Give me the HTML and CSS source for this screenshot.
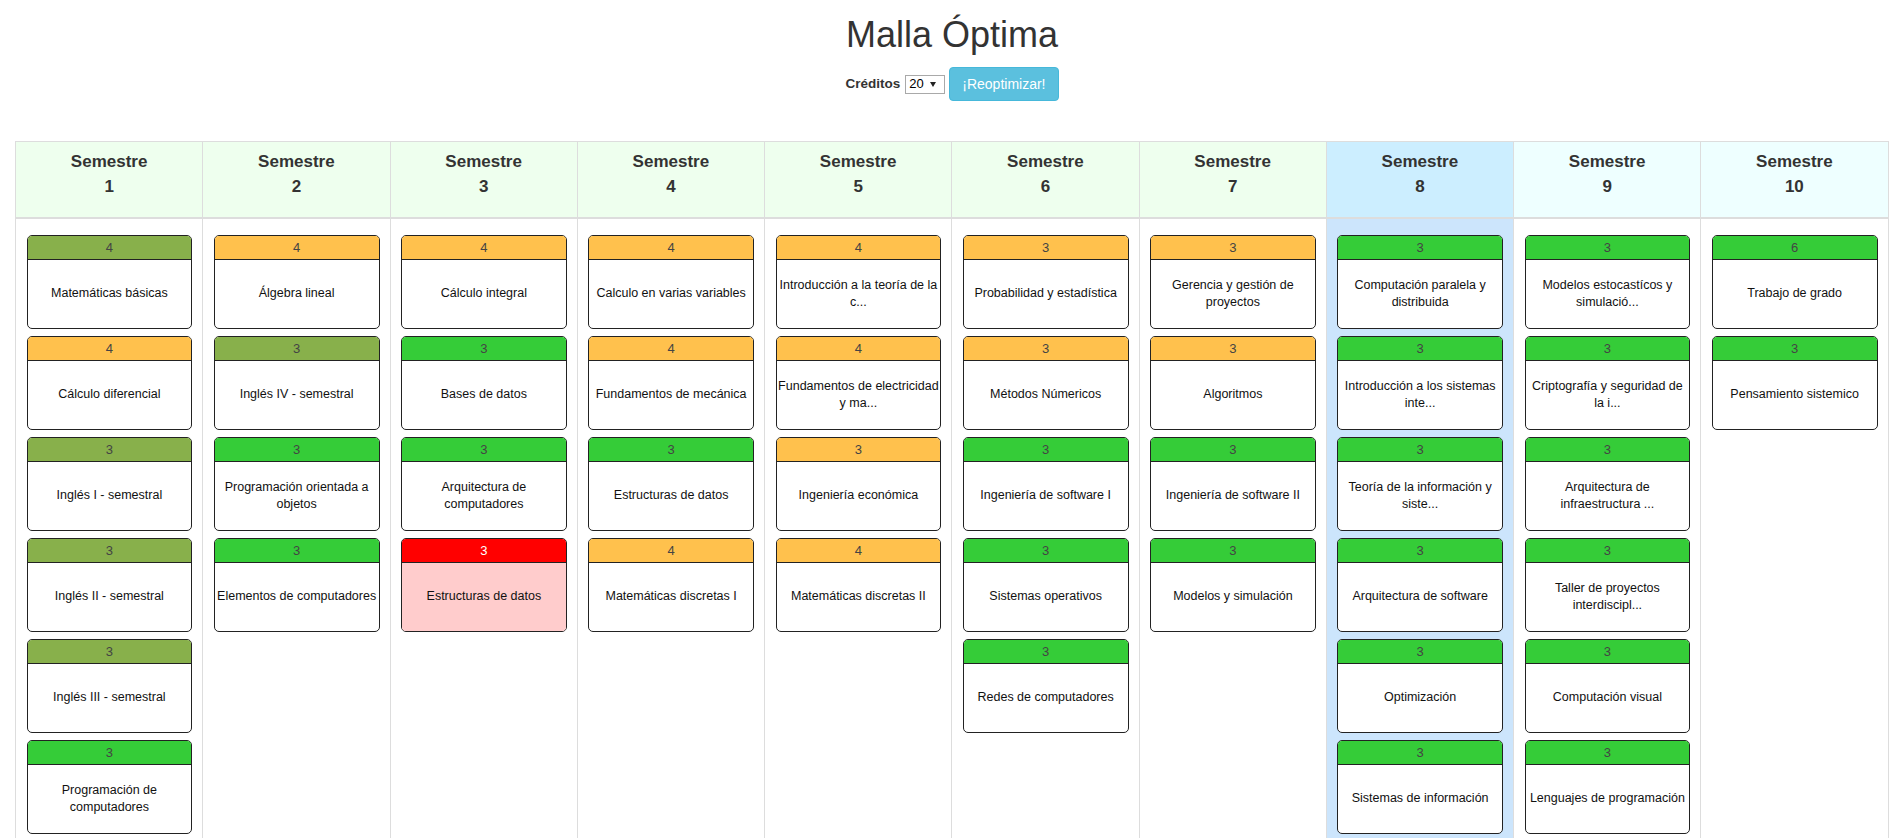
FILE: index.html
```html
<!DOCTYPE html>
<html lang="es">
<head>
<meta charset="utf-8">
<title>Malla Óptima</title>
<link rel="stylesheet" href="styles.css">
</head>
<body>
<div class="page">
  <h1 class="title">Malla Óptima</h1>
  <div class="controls">
    <label class="label">Créditos</label>
    <span class="select">20<span class="arrow"></span></span>
    <button class="btn">¡Reoptimizar!</button>
  </div>

  <div class="board">
    <div class="col">
      <div class="col-head h-green">Semestre<br>1</div>
      <div class="col-body">
        <div class="card"><div class="card-head olive">4</div><div class="card-body">Matemáticas básicas</div></div>
        <div class="card"><div class="card-head orange">4</div><div class="card-body">Cálculo diferencial</div></div>
        <div class="card"><div class="card-head olive">3</div><div class="card-body">Inglés I - semestral</div></div>
        <div class="card"><div class="card-head olive">3</div><div class="card-body">Inglés II - semestral</div></div>
        <div class="card"><div class="card-head olive">3</div><div class="card-body">Inglés III - semestral</div></div>
        <div class="card"><div class="card-head green">3</div><div class="card-body">Programación de computadores</div></div>
      </div>
    </div>
    <div class="col">
      <div class="col-head h-green">Semestre<br>2</div>
      <div class="col-body">
        <div class="card"><div class="card-head orange">4</div><div class="card-body">Álgebra lineal</div></div>
        <div class="card"><div class="card-head olive">3</div><div class="card-body">Inglés IV - semestral</div></div>
        <div class="card"><div class="card-head green">3</div><div class="card-body">Programación orientada a objetos</div></div>
        <div class="card"><div class="card-head green">3</div><div class="card-body">Elementos de computadores</div></div>
      </div>
    </div>
    <div class="col">
      <div class="col-head h-green">Semestre<br>3</div>
      <div class="col-body">
        <div class="card"><div class="card-head orange">4</div><div class="card-body">Cálculo integral</div></div>
        <div class="card"><div class="card-head green">3</div><div class="card-body">Bases de datos</div></div>
        <div class="card"><div class="card-head green">3</div><div class="card-body">Arquitectura de computadores</div></div>
        <div class="card"><div class="card-head red">3</div><div class="card-body pink">Estructuras de datos</div></div>
      </div>
    </div>
    <div class="col">
      <div class="col-head h-green">Semestre<br>4</div>
      <div class="col-body">
        <div class="card"><div class="card-head orange">4</div><div class="card-body">Calculo en varias variables</div></div>
        <div class="card"><div class="card-head orange">4</div><div class="card-body">Fundamentos de mecánica</div></div>
        <div class="card"><div class="card-head green">3</div><div class="card-body">Estructuras de datos</div></div>
        <div class="card"><div class="card-head orange">4</div><div class="card-body">Matemáticas discretas I</div></div>
      </div>
    </div>
    <div class="col">
      <div class="col-head h-green">Semestre<br>5</div>
      <div class="col-body">
        <div class="card"><div class="card-head orange">4</div><div class="card-body">Introducción a la teoría de la c...</div></div>
        <div class="card"><div class="card-head orange">4</div><div class="card-body">Fundamentos de electricidad y ma...</div></div>
        <div class="card"><div class="card-head orange">3</div><div class="card-body">Ingeniería económica</div></div>
        <div class="card"><div class="card-head orange">4</div><div class="card-body">Matemáticas discretas II</div></div>
      </div>
    </div>
    <div class="col">
      <div class="col-head h-green">Semestre<br>6</div>
      <div class="col-body">
        <div class="card"><div class="card-head orange">3</div><div class="card-body">Probabilidad y estadística</div></div>
        <div class="card"><div class="card-head orange">3</div><div class="card-body">Métodos Númericos</div></div>
        <div class="card"><div class="card-head green">3</div><div class="card-body">Ingeniería de software I</div></div>
        <div class="card"><div class="card-head green">3</div><div class="card-body">Sistemas operativos</div></div>
        <div class="card"><div class="card-head green">3</div><div class="card-body">Redes de computadores</div></div>
      </div>
    </div>
    <div class="col">
      <div class="col-head h-green">Semestre<br>7</div>
      <div class="col-body">
        <div class="card"><div class="card-head orange">3</div><div class="card-body">Gerencia y gestión de proyectos</div></div>
        <div class="card"><div class="card-head orange">3</div><div class="card-body">Algoritmos</div></div>
        <div class="card"><div class="card-head green">3</div><div class="card-body">Ingeniería de software II</div></div>
        <div class="card"><div class="card-head green">3</div><div class="card-body">Modelos y simulación</div></div>
      </div>
    </div>
    <div class="col">
      <div class="col-head h-blue">Semestre<br>8</div>
      <div class="col-body b-blue">
        <div class="card"><div class="card-head green">3</div><div class="card-body">Computación paralela y distribuida</div></div>
        <div class="card"><div class="card-head green">3</div><div class="card-body">Introducción a los sistemas inte...</div></div>
        <div class="card"><div class="card-head green">3</div><div class="card-body">Teoría de la información y siste...</div></div>
        <div class="card"><div class="card-head green">3</div><div class="card-body">Arquitectura de software</div></div>
        <div class="card"><div class="card-head green">3</div><div class="card-body">Optimización</div></div>
        <div class="card"><div class="card-head green">3</div><div class="card-body">Sistemas de información</div></div>
      </div>
    </div>
    <div class="col">
      <div class="col-head h-cyan">Semestre<br>9</div>
      <div class="col-body">
        <div class="card"><div class="card-head green">3</div><div class="card-body">Modelos estocastícos y simulació...</div></div>
        <div class="card"><div class="card-head green">3</div><div class="card-body">Criptografía y seguridad de la i...</div></div>
        <div class="card"><div class="card-head green">3</div><div class="card-body">Arquitectura de infraestructura ...</div></div>
        <div class="card"><div class="card-head green">3</div><div class="card-body">Taller de proyectos interdiscipl...</div></div>
        <div class="card"><div class="card-head green">3</div><div class="card-body">Computación visual</div></div>
        <div class="card"><div class="card-head green">3</div><div class="card-body">Lenguajes de programación</div></div>
      </div>
    </div>
    <div class="col">
      <div class="col-head h-cyan">Semestre<br>10</div>
      <div class="col-body">
        <div class="card"><div class="card-head green">6</div><div class="card-body">Trabajo de grado</div></div>
        <div class="card"><div class="card-head green">3</div><div class="card-body">Pensamiento sistemico</div></div>
      </div>
    </div>
  </div>
</div>
</body>
</html>
```

FILE: styles.css
```css
* { box-sizing: border-box; }

html, body {
  margin: 0;
  padding: 0;
  background: #fff;
}

body {
  font-family: "Liberation Sans", Arial, Helvetica, sans-serif;
  color: #333;
  font-size: 14px;
  line-height: 1.42857;
}

.page {
  width: 1874px;
  margin-left: 15px;
}

.title {
  margin: 15px 0 0;
  font-size: 36px;
  font-weight: 500;
  line-height: 1.1;
  text-align: center;
  color: #333;
}

.controls {
  margin-top: 12px;
  display: flex;
  justify-content: center;
  align-items: center;
  height: 34px;
}

.label {
  font-weight: bold;
  font-size: 13.5px;
  color: #333;
  margin-right: 5px;
}

.select {
  display: inline-flex;
  align-items: center;
  width: 40px;
  height: 19px;
  border: 1px solid #a9a9a9;
  background: #fff;
  color: #000;
  font-size: 13px;
  padding-left: 3px;
  margin-right: 4px;
  margin-top: 1px;
}

.arrow {
  width: 0;
  height: 0;
  margin-left: 6px;
  border-left: 3.5px solid transparent;
  border-right: 3.5px solid transparent;
  border-top: 5px solid #222;
}

.btn {
  height: 34px;
  padding: 6px 12px;
  font-family: inherit;
  font-size: 14px;
  line-height: 20px;
  color: #fff;
  background: #5bc0de;
  border: 1px solid #46b8da;
  border-radius: 4px;
}

.board {
  margin-top: 40px;
  display: grid;
  grid-template-columns: repeat(10, 187.25px);
  border-left: 1px solid #ddd;
  width: 1874px;
}

.col {
  display: flex;
  flex-direction: column;
  border-right: 1px solid #ddd;
  min-height: 760px;
}

.col-head {
  height: 78px;
  border-top: 1px solid #ddd;
  border-bottom: 2px solid #ddd;
  padding-top: 7px;
  text-align: center;
  font-weight: bold;
  font-size: 17px;
  line-height: 25px;
  color: #333;
}

.h-green { background: #eeffee; }
.h-blue { background: #cceeff; }
.h-cyan { background: #eeffff; }

.col-body {
  flex: 1;
  padding: 16px 10px 0 10.5px;
}

.b-blue { background: #cce5fc; }

.card {
  border: 1px solid #222;
  border-radius: 5px;
  overflow: hidden;
  background: #fff;
  margin-bottom: 7px;
}

.card-head {
  height: 24px;
  line-height: 23px;
  border-bottom: 1px solid #222;
  text-align: center;
  font-size: 13px;
  color: #444;
}

.olive { background: #88b04b; }
.orange { background: #ffc14d; }
.green { background: #35cc38; }
.red { background: #ff0000; color: #fff; }

.card-body {
  height: 68px;
  display: flex;
  align-items: center;
  justify-content: center;
  text-align: center;
  font-size: 12.5px;
  line-height: 17px;
  color: #111;
  padding: 0 1px;
}

.pink { background: #ffcccc; }
```
